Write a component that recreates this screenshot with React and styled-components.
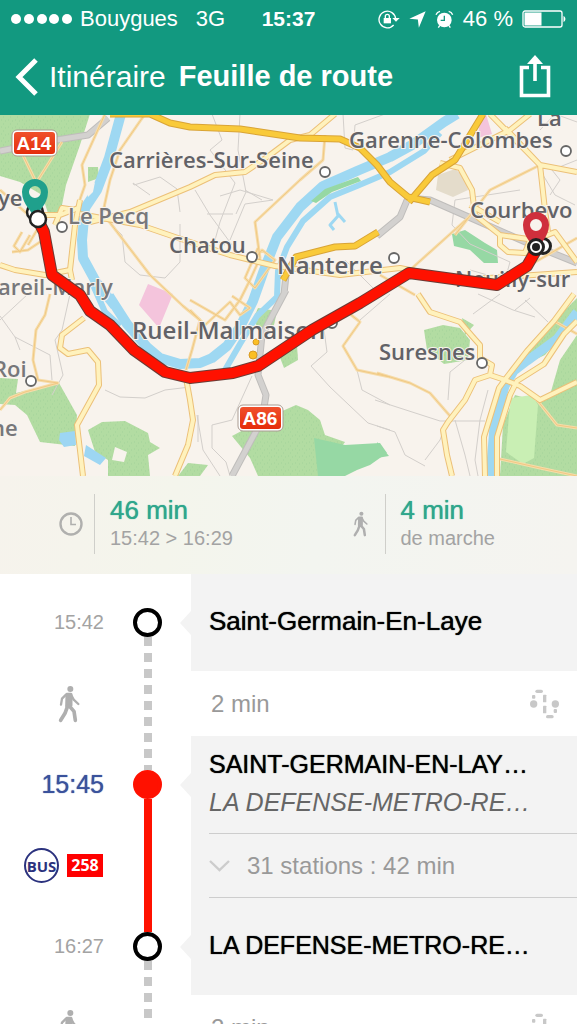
import React, { useState } from 'react'
import styled, { createGlobalStyle, css } from 'styled-components'

const GREEN = '#129980'
const TEAL = '#2fa68c'
const GREY = '#a3a3a3'
const PANEL = '#f3f3f3'
const RED = '#ff1100'

const GlobalStyle = createGlobalStyle`
  * {
    box-sizing: border-box;
  }
  body {
    margin: 0;
    background: #fff;
    font-family: 'Liberation Sans', Arial, sans-serif;
  }
  p, ol, h1 {
    margin: 0;
    padding: 0;
  }
`

// Helvetica Neue "medium" look, between regular and bold
const medium = css`
  text-shadow: 0 0 1px currentColor;
`

const Screen = styled.div`
  height: 100vh;
  display: flex;
  flex-direction: column;
  overflow: hidden;
`

/* ---------- header ---------- */

const Header = styled.header`
  flex: none;
  background: ${GREEN};
  color: #fff;
`

const StatusBar = styled.div`
  display: grid;
  grid-template-columns: 1fr auto 1fr;
  align-items: center;
  height: 38px;
  padding: 0 11px;
  font-size: 22px;
`

const StatusGroup = styled.div`
  display: flex;
  align-items: center;
  gap: ${props => props.$gap || 8}px;
  justify-content: ${props => (props.$end ? 'flex-end' : 'flex-start')};
  white-space: nowrap;
`

const Network = styled.span`
  margin-left: 10px;
`

const Clock = styled.span`
  font-size: 21px;
  font-weight: bold;
`

const NavBar = styled.nav`
  display: flex;
  align-items: center;
  height: 77px;
  padding: 0 26px 0 14px;
`

const BackLink = styled.a`
  display: flex;
  align-items: center;
  gap: 10px;
  color: inherit;
  font-size: 30px;
  text-decoration: none;
`

const Title = styled.h1`
  flex: 1;
  margin-left: 13px;
  font-size: 29px;
  font-weight: bold;
  white-space: nowrap;
`

const IconButton = styled.button`
  display: flex;
  padding: 0;
  border: 0;
  background: none;
  color: inherit;
`

/* ---------- map ---------- */

const MapSvg = styled.svg`
  flex: none;
  display: block;
  width: 100%;
  background: #f8f3ed;
`

const Place = styled.text`
  font-family: 'Open Sans', 'Noto Sans', sans-serif;
  font-size: ${props => props.$size || 22}px;
  font-weight: 600;
  fill: ${props => (props.$soft ? '#77777a' : '#626267')};
  stroke: #f8f3ed;
  stroke-width: 2px;
  paint-order: stroke;
`

const ShieldText = styled.text`
  font-size: 19px;
  font-weight: bold;
  fill: #fff;
  text-anchor: middle;
`

/* ---------- summary ---------- */

const Summary = styled.section`
  flex: none;
  display: grid;
  grid-template-columns: 1fr 1fr;
  height: 98px;
  background: linear-gradient(100deg, #f6f3ec, #f4f5ec 30%, #f3f5f0 55%, #f5f4f0);
`

const SummaryItem = styled.div`
  display: flex;
  align-items: center;
  padding-bottom: 2px;
`

const SummaryIcon = styled.div`
  flex: none;
  display: flex;
  justify-content: flex-end;
  width: ${props => props.$width}px;
  padding-right: ${props => props.$pad}px;
`

const SummaryText = styled.div`
  padding: 2px 0 2px 15px;
  border-left: 1px solid #cfcfca;
`

const Amount = styled.p`
  ${medium}
  color: ${TEAL};
  font-size: 26px;
  line-height: 28px;
`

const Detail = styled.p`
  color: ${GREY};
  font-size: 20px;
  line-height: 28px;
`

/* ---------- itinerary ---------- */

const Steps = styled.ol`
  flex: 1;
  min-height: 0;
  overflow-y: auto;
  scrollbar-width: none;
  list-style: none;
`

const Step = styled.li`
  display: grid;
  grid-template-columns: 104px 87px minmax(0, 1fr);
  min-height: ${props => (props.$tall ? 97 : 65)}px;
`

const Left = styled.div`
  display: flex;
  align-items: center;
  justify-content: flex-end;
  gap: 8px;
  padding-right: ${props => props.$inset || 0}px;
`

const Time = styled.time`
  ${props => props.$strong && medium}
  color: ${props => (props.$strong ? '#3a529c' : GREY)};
  font-size: ${props => (props.$strong ? 25 : 20)}px;
`

const Rail = styled.div`
  display: flex;
  flex-direction: column;
  align-items: center;
`

const lines = {
  none: 'none',
  solid: RED,
  dashed: 'repeating-linear-gradient(#c8c8c8 0 9px, transparent 9px 16px)',
}

const Line = styled.div`
  flex: 1;
  width: 8px;
  background: ${props => lines[props.$kind]};
  background-position-y: ${props => props.$shift || 0}px;
`

const Dot = styled.div`
  width: 29px;
  height: 29px;
  border: 4px solid ${props => (props.$filled ? RED : '#000')};
  border-radius: 50%;
  background: ${props => (props.$filled ? RED : '#fff')};
`

const Body = styled.div`
  position: relative;
  display: flex;
  flex-direction: column;
  justify-content: center;
  padding-left: 18px;
  background: ${props => (props.$plain ? '#fff' : PANEL)};

  ${props => props.$arrow && css`
    padding-bottom: 3px;

    &::before {
      content: '';
      position: absolute;
      top: calc(50% - 12px);
      right: 100%;
      border: solid transparent;
      border-width: 12px 11px 12px 0;
      border-right-color: ${PANEL};
    }
  `}
`

const StopName = styled.p`
  ${medium}
  color: #000;
  font-size: ${props => (props.$station ? 25 : 26)}px;
  line-height: 38px;
  white-space: nowrap;
`

const Direction = styled(StopName)`
  color: #666;
  font-style: italic;
  text-shadow: none;
`

const WalkInfo = styled.div`
  display: flex;
  align-items: center;
  justify-content: space-between;
  padding: 0 17px 0 2px;
  color: #999;
  font-size: 24px;
`

const Stations = styled.button`
  display: flex;
  align-items: center;
  gap: 17px;
  flex: 1;
  padding: 0;
  border: solid #cdcdcd;
  border-width: 1px 0;
  background: none;
  color: #999;
  font: 24px 'Liberation Sans', Arial, sans-serif;

  svg {
    transform: ${props => (props.$open ? 'rotate(180deg)' : 'none')};
  }
`

const BusBadge = styled.span`
  display: flex;
  align-items: center;
  justify-content: center;
  width: 35px;
  height: 35px;
  border: 2px solid #2b327e;
  border-radius: 50%;
  color: #2b327e;
  font: bold 15px 'Open Sans', sans-serif;
`

const LineBadge = styled.span`
  width: 36px;
  background: #f00;
  color: #fff;
  font: bold 16px/23px 'Open Sans', sans-serif;
  text-align: center;
`

/* ---------- icons ---------- */

const SignalDots = () => (
  <svg width="61" height="12" fill="#fff" aria-hidden="true">
    {[5, 18, 31, 43, 56].map(x => <circle key={x} cx={x} cy="6" r="5" />)}
  </svg>
)

const LockIcon = () => (
  <svg width="22" height="20" viewBox="0 0 66 60" fill="none" stroke="#fff" aria-hidden="true">
    <path d="M47 48A25 25 0 1 1 53 30" strokeWidth="4" />
    <path d="M43 27H65L54 38Z" fill="#fff" stroke="none" />
    <path d="M17 27H39V43H17Z" fill="#fff" stroke="none" />
    <path d="M22 28V22A6 6 0 0 1 34 22V28" strokeWidth="4" />
  </svg>
)

const LocationIcon = () => (
  <svg width="17" height="17" viewBox="0 0 50 50" fill="#fff" aria-hidden="true">
    <path d="M49 1L29 49L26 25L1 23Z" />
  </svg>
)

const AlarmIcon = () => (
  <svg width="19" height="19" viewBox="0 0 57 57" fill="none" stroke="#fff" aria-hidden="true">
    <circle cx="28" cy="30" r="22" fill="#fff" stroke="none" />
    <path d="M28 17V31H17" stroke={GREEN} strokeWidth="4" />
    <path d="M3 14A16 16 0 0 1 15 4M41 4A16 16 0 0 1 53 14M14 47L10 53M42 47L46 53" strokeWidth="4" />
  </svg>
)

const BatteryIcon = () => (
  <svg width="44" height="18" viewBox="0 0 44 18" aria-hidden="true">
    <rect x="1" y="1" width="39" height="16" rx="2" fill="none" stroke="#fff" strokeWidth="1.3" />
    <rect x="2.5" y="2.5" width="17" height="13" fill="#fff" />
    <path d="M41.5 6C44 7 44 11 41.5 12Z" fill="#fff" />
  </svg>
)

const BackIcon = () => (
  <svg width="25" height="40" viewBox="0 0 25 40" fill="none" aria-hidden="true">
    <path d="M22 3L5 20L22 37" stroke="#fff" strokeWidth="5" />
  </svg>
)

const ShareIcon = () => (
  <svg width="32" height="43" viewBox="0 0 32 43" fill="none" stroke="#fff" aria-hidden="true">
    <path d="M10 12.5H2.5V40.5H29.5V12.5H22M16 26V6" strokeWidth="3.6" />
    <path d="M8 9L16 0L24 9Z" fill="#fff" stroke="none" />
  </svg>
)

const ClockIcon = () => (
  <svg width="24" height="24" viewBox="0 0 24 24" fill="none" stroke="#b0b0ae" aria-hidden="true">
    <circle cx="12" cy="12" r="10.5" strokeWidth="2.4" />
    <path d="M12 5V12.5H17" strokeWidth="1.6" />
  </svg>
)

const WalkIcon = ({ width = 22, height = 38 }) => (
  <svg
    width={width}
    height={height}
    viewBox="174 327 66 114"
    fill="none"
    stroke="#afafaf"
    strokeLinecap="round"
    strokeLinejoin="round"
    aria-hidden="true"
  >
    <circle cx="211" cy="339" r="9" fill="#afafaf" stroke="none" />
    <path d="M201 355L213 355L213 388L200 390Z" fill="#afafaf" strokeWidth="9" />
    <path d="M198 356L186 368L183 386M214 358L221 371L235 384" strokeWidth="7" />
    <path d="M203 390L195 412L182 433M208 390L222 406L226 433" strokeWidth="11" />
  </svg>
)

const StepsIcon = () => (
  <svg width="30" height="30" viewBox="0 0 90 90" fill="#c8c8c8" aria-hidden="true">
    <rect x="16" y="2" width="23" height="10" rx="5" />
    <rect x="6" y="18" width="10" height="11" rx="3" />
    <circle cx="11" cy="45" r="11" />
    <rect x="39" y="17" width="10" height="23" rx="2" />
    <rect x="39" y="50" width="10" height="23" rx="2" />
    <circle cx="76" cy="45" r="11" />
    <rect x="71" y="60" width="10" height="12" rx="3" />
    <rect x="48" y="78" width="23" height="10" rx="5" />
  </svg>
)

const ChevronIcon = () => (
  <svg width="21" height="13" viewBox="0 0 21 13" fill="none" aria-hidden="true">
    <path d="M1 2L10.500 11L20 2" stroke="#ccc" strokeWidth="2.4" />
  </svg>
)

/* ---------- map data ---------- */

const PATHS = [
  'M150 195L133 183L134 185L160 177L177 189L180 212M180 224V262L165 278L140 275L125 262L122 235L112 225L105 205',
  'M212 114L222 140L210 150L235 183L220 222L215 240L225 245M195 190L210 215L232 245M207 214H233M220 196L240 190L273 200L245 204L230 240',
  'M240 114L238 150L246 192L236 214M262 200L245 190M343 114L345 148L353 150L355 125L385 114',
  'M0 320L28 294M0 316L15 337L20 350M15 337L50 355L52 380M70 294L62 330L55 340L63 375L52 395',
  'M105 390L120 397L145 398L165 390L190 387M198 415V442M252 376L232 420L212 425L212 448L226 462L230 476M197 415L203 450L220 476',
  'M324 330L327 352L311 366L330 387L368 423L390 430M357 370L362 390L390 405M375 400L440 421H485M377 426L395 432L405 455L425 466M425 460L440 440L447 421',
  'M448 400L450 372L465 360M455 420L465 455L470 476M488 390L480 420L475 460L478 476',
  'M478 294L513 310L535 317M515 310L530 298M525 300L548 322M473 314L500 294',
  'M455 200L452 225L470 244L510 262L505 280L470 270M455 200L520 190M540 170L555 195L575 205M550 195L560 180L552 170L577 160M540 130L555 114L577 122',
  'M390 294L360 320M345 260L375 290L365 300',
]

const MINOR_ROADS = [
  'M18 145L35 180M62 142L38 180',
  'M105 114L82 165L85 185L78 205',
  'M145 114L120 150L110 180L103 212M108 220L150 275L183 306L200 320',
  'M325 135L323 160L300 180L255 222L260 258L250 280L240 300',
  'M50 294L45 315L36 330L33 360L38 380L58 383L25 392L10 398L0 410',
  'M0 190L40 225L28 245M40 242L28 250L12 252M22 232L14 246L20 252L30 235',
  'M252 262L262 250L275 260L255 288L245 278L258 248M232 296L250 308L240 315L230 302L205 325L190 310',
  'M190 300L225 320L240 300M200 320L192 350L186 370',
  'M377 373L410 383L430 393L450 416M350 314L360 322L343 346L357 370L390 377',
  'M455 235L490 190L540 165M410 270L468 218M530 265L577 238M380 275L415 295',
  'M500 459L540 468L577 476M537 400L557 425L577 428M554 321L577 334',
]

const ROADS = [
  'M90 222L130 212L190 187L215 175L245 172L270 155L290 140L310 135L335 114',
  'M80 214L140 225L175 237L230 255L275 266L340 275L400 268L460 280L577 272',
  'M80 200L75 225L70 270L72 280',
  'M0 265L15 270L45 275L70 270M30 215L60 215L78 208M55 225L62 208L75 210',
  'M84 318L62 335L60 348L68 354L88 350L98 362L99 385L88 405L77 425L83 476',
  'M186 378L190 400L193 420L188 445L175 476',
  'M490 114L540 165L577 172M540 165L545 210L548 232M540 165L505 128',
  'M440 163L460 168L472 190L475 215L500 235L535 240L555 232L577 262',
  'M500 235L500 245L508 252L525 253L530 240M470 205L500 222',
  'M418 294L430 312L460 322L472 336L480 345L480 358L492 365L490 375L475 380L465 400L448 422L443 430L447 455L452 476',
  'M490 375L505 380L520 386L540 400L577 382',
  'M574 294L554 321L527 351L507 377L499 388L484 437L485 476',
  'M577 321L564 334L544 364L517 381L510 395L497 437L497 476',
  'M450 160L510 130L530 114',
]

const HIGHWAYS = [
  'M110 114L150 114L170 123L190 127L240 129L300 138L340 139L360 148L377 165L390 182L408 197L430 202',
  'M483 114L455 160L432 175L409 202',
  'M283 280L296 257L335 247L355 246L378 232',
]

const PARKS = [
  'M0 114H90L80 145L66 185L62 205L58 213H48L42 195L20 182L0 176Z',
  'M88 167L98 167L99 178L88 182Z',
  'M0 378L18 379L16 393L59 383L77 415L75 446L40 442L27 415L15 405L0 404Z',
  'M88 430L102 422L125 421L148 433L150 442L160 448L148 455L150 476H108V460L95 452Z',
  'M258 308L277 311L274 325L257 328L254 317Z',
  'M279 355L297 345L298 360L284 368Z',
  'M232 436L262 420L296 405L308 410L320 420L325 435L345 442L320 476H258L250 458Z',
  'M424 330L443 325L460 328L470 340L468 360L444 364L427 350Z',
  'M462 318L474 325L465 335Z',
  'M577 335L560 360L550 395L540 402L515 395L503 425L500 476H577Z',
  'M577 298L552 323L530 350L513 370L545 355L577 318Z',
  'M178 476L188 463L208 465L200 476Z',
]

const DEEP_PARKS = [
  'M314 438L345 445L380 443L387 453L370 465L357 470L345 476H318Z',
  'M377 442L389 456L377 458Z',
  'M452 234L465 230L485 243L497 250L498 263H484L470 250L454 246Z',
]

const WATER = [
  { d: 'M121 114L109 158L97 190L85 208L82 240L83 258L96 282L115 306', w: 10 },
  { d: 'M93 285L105 312L120 326', w: 6 },
  { d: 'M109 296L127 324L147 347L160 358L180 364L200 363L212 358L227 346L240 327L253 301L264 270L277 237L300 207L323 186L357 171L390 157L412 145L444 122L457 114', w: 10 },
  { d: 'M225 370L240 344L257 316L277 297L278 271L287 247L303 221L330 197L357 186L390 172L424 151L440 133', w: 6 },
  { d: 'M577 312L557 339L527 361L514 371L505 386L494 427L490 476', w: 9 },
  { d: 'M335 202L338 216L330 225L334 230M338 214L345 222', w: 3 },
]

const ROUTE = 'M38 220L44 232L52 275L80 295L90 311L110 325L134 350L165 372L190 378L233 373L258 366L312 330L360 303L409 273L497 285L527 266L538 247'

const PLACES = [
  { x: 109, y: 168, label: 'Carrières-Sur-Seine', dot: [325, 172] },
  { x: 349, y: 148, label: 'Garenne-Colombes', dot: [566, 151] },
  { x: 537, y: 126, label: 'La' },
  { x: 68, y: 224, label: 'Le Pecq', dot: [62, 227], soft: true },
  { x: -2, y: 206, label: 'ye' },
  { x: 169, y: 253, label: 'Chatou', dot: [252, 257] },
  { x: 277, y: 274, label: 'Nanterre', dot: [394, 258], size: 24 },
  { x: 470, y: 218, label: 'Courbevo' },
  { x: 455, y: 287, label: 'Neuilly-sur' },
  { x: -2, y: 295, label: 'areil-Marly', soft: true },
  { x: 132, y: 339, label: 'Rueil-Malmaison', dot: [332, 323], size: 24 },
  { x: 379, y: 360, label: 'Suresnes', dot: [482, 363] },
  { x: -7, y: 377, label: 'Roi', dot: [31, 381], soft: true },
  { x: -9, y: 436, label: 'ne', soft: true },
]

const Roads = ({ paths, casing, color, width }) => (
  <g fill="none" strokeLinejoin="round">
    {paths.map(d => <path key={d} d={d} stroke={casing} strokeWidth={width + 2} />)}
    {paths.map(d => <path key={d} d={d} stroke={color} strokeWidth={width} />)}
  </g>
)

const Shield = ({ x, y, label }) => (
  <g>
    <rect x={x} y={y} width="45" height="26" rx="5" fill="#fff" stroke="#a99a90" />
    <rect x={x + 2} y={y + 2} width="41" height="22" rx="3" fill="url(#shield)" />
    <ShieldText x={x + 22} y={y + 20}>{label}</ShieldText>
  </g>
)

const Pin = ({ x, y, color }) => (
  <path
    d={`M${x} ${y + 28}C${x - 2} ${y + 19} ${x - 13} ${y + 13} ${x - 13} ${y}A13 13 0 1 1 ${x + 13} ${y}C${x + 13} ${y + 13} ${x + 2} ${y + 19} ${x} ${y + 28}ZM${x - 6} ${y}A6 6 0 1 0 ${x + 6} ${y}A6 6 0 1 0 ${x - 6} ${y}Z`}
    fill={color}
    fillRule="evenodd"
  />
)

const RouteMap = () => (
  <MapSvg viewBox="0 115 577 361" role="img" aria-label="Carte">
    <defs>
      <linearGradient id="shield" x2="0" y2="1">
        <stop offset="0" stopColor="#f0502c" />
        <stop offset="1" stopColor="#e52d0b" />
      </linearGradient>
      <pattern id="park" width="7" height="7" patternUnits="userSpaceOnUse">
        <rect width="7" height="7" fill="#b2dca2" />
        <path d="M1 1h1M5 2h1M3 5h1" stroke="#a2d39a" />
      </pattern>
    </defs>
    {PARKS.map(d => <path key={d} d={d} fill="url(#park)" />)}
    {DEEP_PARKS.map(d => <path key={d} d={d} fill="#96d8a4" />)}
    <path d="M511 398L532 395L538 405L534 458L523 464L506 452L509 415Z" fill="#c9efb4" />
    <path d="M112 460L115 447L127 452L124 462Z" fill="#f8f3ed" />
    <path d="M148 284L173 294L159 328L139 305ZM486 114L492 134L478 138L480 118Z" fill="#f4c4dc" />
    <path d="M438 175L455 169L466 178L468 190L453 197L436 190Z" fill="#e4dccb" />
    <path d="M60 433L75 431L76 445L64 447L59 440ZM86 445L106 458L100 465L84 456Z" fill="#9dd6f3" />
    <g fill="none" stroke="#9ed8f2" strokeLinejoin="round">
      {WATER.map(({ d, w }) => <path key={d} d={d} strokeWidth={w} />)}
    </g>
    <path d="M87 193L95 182L93 192L88 197Z" fill="#f8f3ed" />
    <path d="M311 201L325 189L358 177L361 181L332 192L316 203Z" fill="#96d8a4" />
    <g fill="none" stroke="#d3cfcb">
      {PATHS.map(d => <path key={d} d={d} />)}
    </g>
    <Roads
      paths={['M0 151L50 141L88 135L108 118', 'M284 294L286 275M286 290L262 335L258 375L266 395L262 420L232 476', 'M377 236L400 217L408 198L430 200L480 222L530 244L577 263']}
      casing="#bfbdbb"
      color="#d3d1cf"
      width={5}
    />
    <Roads paths={MINOR_ROADS} casing="#f6dcaa" color="#f1c983" width={1} />
    <Roads paths={ROADS} casing="#ecc078" color="#fff2bd" width={4} />
    <Roads paths={HIGHWAYS} casing="#d9a437" color="#f9ca3a" width={5} />
    <circle cx="256" cy="342" r="3" fill="#fbbf24" stroke="#d79a25" />
    <circle cx="253" cy="355" r="4" fill="#fbbf24" stroke="#d79a25" />
    {PLACES.map(({ x, y, label, dot, size, soft }) => (
      <g key={label}>
        <Place x={x} y={y} $size={size} $soft={soft}>{label}</Place>
        {dot && <circle cx={dot[0]} cy={dot[1]} r="5" fill="#fff" stroke="#666" strokeWidth="1.8" />}
      </g>
    ))}
    <Roads paths={[ROUTE]} casing="#6b3b35" color={RED} width={10} />
    <Shield x={12} y={130} label="A14" />
    <Shield x={238} y={405} label="A86" />
    <circle cx="35" cy="212" r="8" fill="#fff" stroke="#222" strokeWidth="2.5" />
    <Pin x={35} y={192} color="#1fa08c" />
    <circle cx="38" cy="219" r="8" fill="#fff" stroke="#222" strokeWidth="2.5" />
    <circle cx="543" cy="246" r="7.500" fill="#fff" stroke="#222" strokeWidth="3" />
    <Pin x={536} y={225} color="#cf2f3c" />
    <circle cx="536" cy="247" r="7.500" fill="#fff" stroke="#222" strokeWidth="3" />
    <circle cx="536" cy="247" r="4" fill="#222" />
  </MapSvg>
)

const WalkStep = ({ duration, shift }) => (
  <Step>
    <Left $inset={24}>
      <WalkIcon />
    </Left>
    <Rail>
      <Line $kind="dashed" $shift={shift} />
    </Rail>
    <Body $plain>
      <WalkInfo>
        {duration}
        <StepsIcon />
      </WalkInfo>
    </Body>
  </Step>
)

const StopStep = ({ time, strong, above, below, shift, name, direction, station }) => (
  <Step $tall>
    <Left>
      <Time $strong={strong}>{time}</Time>
    </Left>
    <Rail>
      <Line $kind={above} $shift={shift} />
      <Dot $filled={strong} />
      <Line $kind={below} />
    </Rail>
    <Body $arrow>
      <StopName $station={station}>{name}</StopName>
      {direction && <Direction $station>{direction}</Direction>}
    </Body>
  </Step>
)

const App = () => {
  const [open, setOpen] = useState(false)

  return (
    <Screen>
      <GlobalStyle />
      <Header>
        <StatusBar>
          <StatusGroup>
            <SignalDots />
            <span>Bouygues</span>
            <Network>3G</Network>
          </StatusGroup>
          <Clock>15:37</Clock>
          <StatusGroup $end $gap={9}>
            <LockIcon />
            <LocationIcon />
            <AlarmIcon />
            <span>46 %</span>
            <BatteryIcon />
          </StatusGroup>
        </StatusBar>
        <NavBar>
          <BackLink href="#itineraire">
            <BackIcon />
            Itinéraire
          </BackLink>
          <Title>Feuille de route</Title>
          <IconButton type="button" aria-label="Partager">
            <ShareIcon />
          </IconButton>
        </NavBar>
      </Header>

      <RouteMap />

      <Summary>
        <SummaryItem>
          <SummaryIcon $width={94} $pad={11}>
            <ClockIcon />
          </SummaryIcon>
          <SummaryText>
            <Amount>46 min</Amount>
            <Detail>15:42 &gt; 16:29</Detail>
          </SummaryText>
        </SummaryItem>
        <SummaryItem>
          <SummaryIcon $width={96} $pad={17}>
            <WalkIcon width={15} height={26} />
          </SummaryIcon>
          <SummaryText>
            <Amount>4 min</Amount>
            <Detail>de marche</Detail>
          </SummaryText>
        </SummaryItem>
      </Summary>

      <Steps>
        <StopStep time="15:42" above="none" below="dashed" name="Saint-Germain-En-Laye" />
        <WalkStep duration="2 min" shift={-2} />
        <StopStep
          time="15:45"
          strong
          station
          above="dashed"
          shift={-3}
          below="solid"
          name="SAINT-GERMAIN-EN-LAY…"
          direction="LA DEFENSE-METRO-RE…"
        />
        <Step>
          <Left $inset={1}>
            <BusBadge>BUS</BusBadge>
            <LineBadge>258</LineBadge>
          </Left>
          <Rail>
            <Line $kind="solid" />
          </Rail>
          <Body>
            <Stations type="button" $open={open} aria-expanded={open} onClick={() => setOpen(!open)}>
              <ChevronIcon />
              31 stations : 42 min
            </Stations>
          </Body>
        </Step>
        <StopStep time="16:27" station above="solid" below="dashed" name="LA DEFENSE-METRO-RE…" />
        <WalkStep duration="2 min" shift={-2} />
      </Steps>
    </Screen>
  )
}

export default App
